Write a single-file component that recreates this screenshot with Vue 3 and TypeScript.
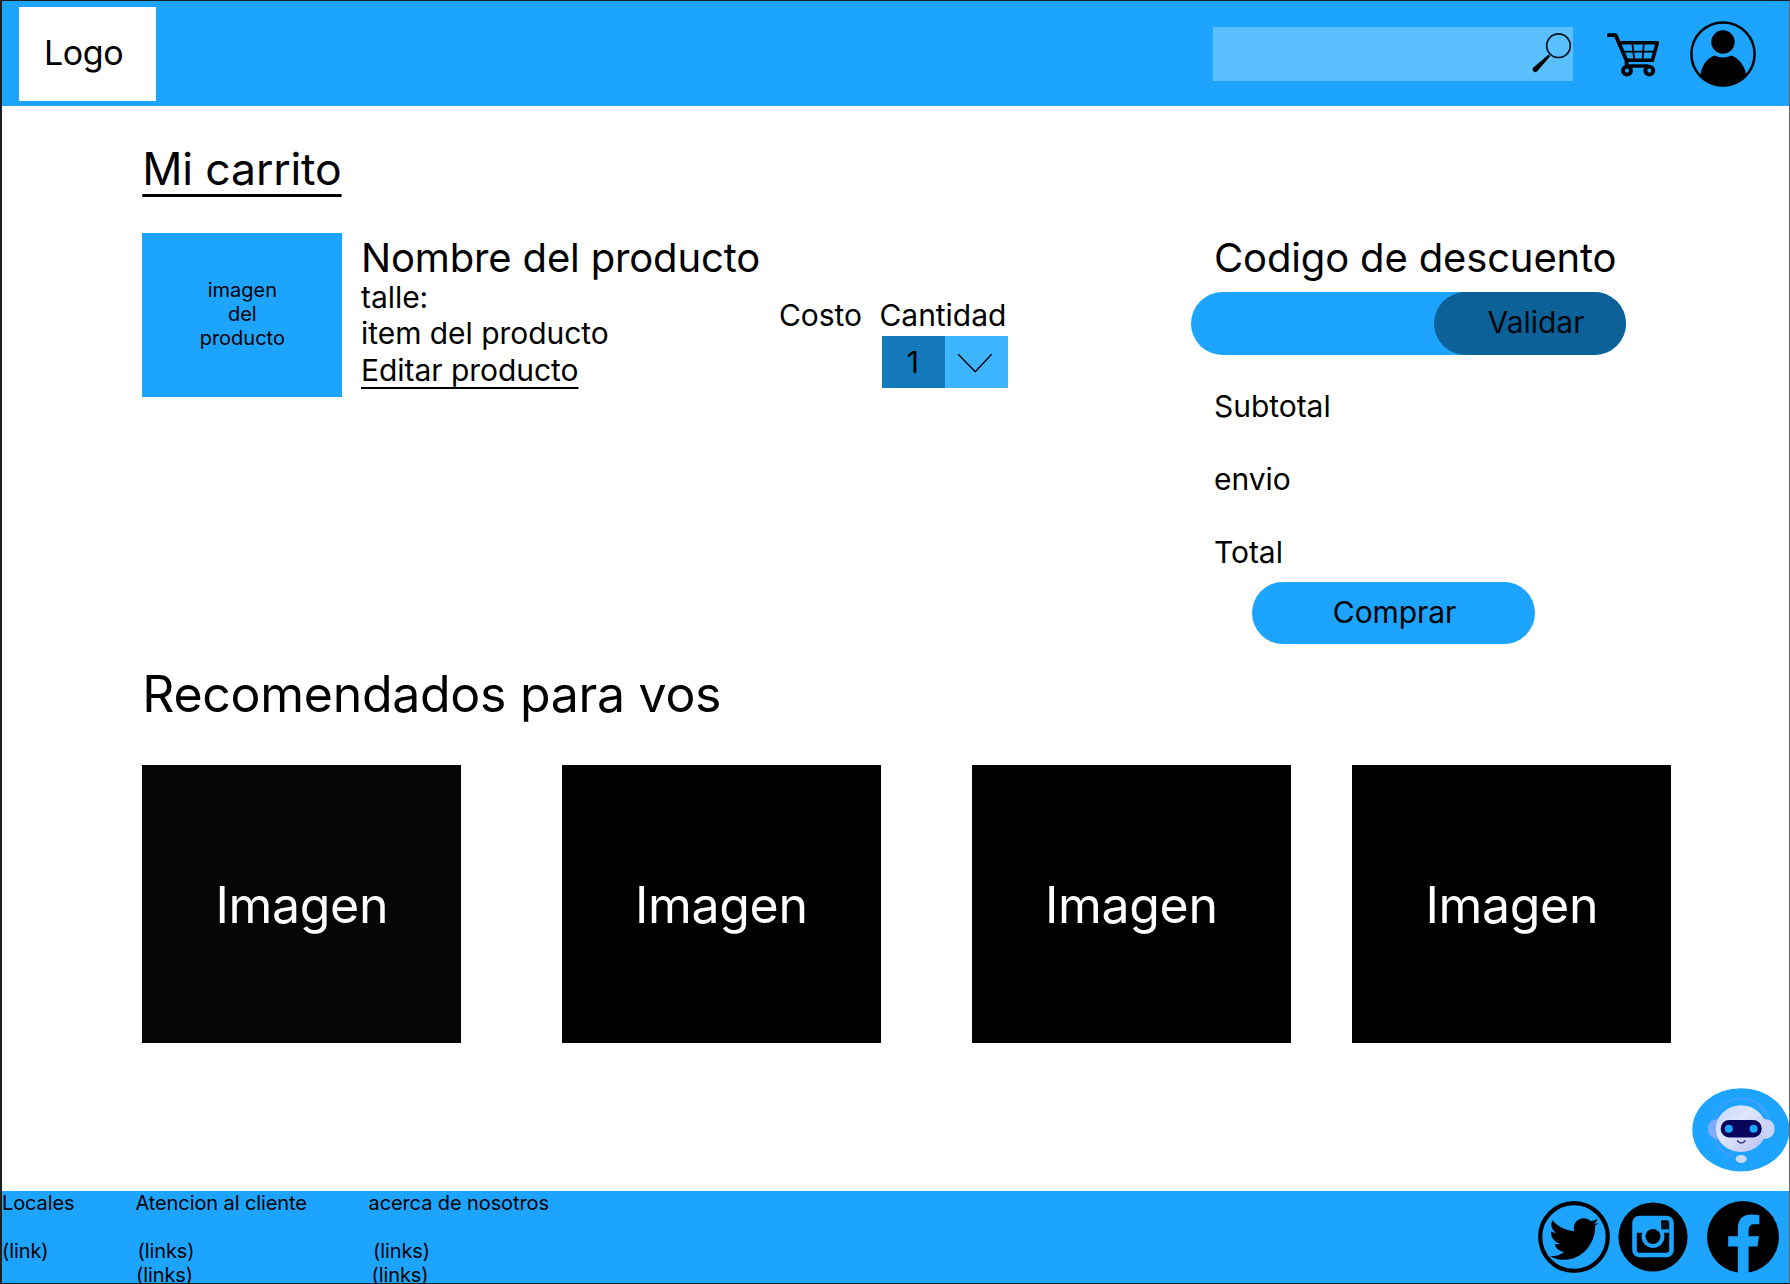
<script setup lang="ts">
interface FooterColumn {
  title: string
  links: string[]
}

const recommended: string[] = ['Imagen', 'Imagen', 'Imagen', 'Imagen']

const summary: string[] = ['Subtotal', 'envio', 'Total']

const footerColumns: FooterColumn[] = [
  { title: 'Locales', links: ['(link)'] },
  { title: 'Atencion al cliente', links: ['(links)', '(links)'] },
  { title: 'acerca de nosotros', links: ['(links)', '(links)'] },
]
</script>

<template>
  <div class="page">
    <header class="header">
      <div class="logo">Logo</div>
      <div class="search">
        <svg class="search-icon" width="42" height="42" viewBox="0 0 42 42">
          <circle cx="28.5" cy="14.7" r="11.8" fill="none" stroke="#06131c" stroke-width="1.7" />
          <path d="M18.6 23.6 L20.2 25.2 L7 40.6 Q4.6 42 3 39.8 Q1.6 37.8 3.4 36.6 Z" fill="#000" />
        </svg>
      </div>
      <svg class="cart" width="54" height="46" viewBox="0 0 54 46">
        <g fill="none" stroke="#000">
          <path d="M1.7 4.2 H8.6 L19.6 29.8 V34" stroke-width="3.8" stroke-linecap="round" stroke-linejoin="round" />
          <path d="M12.5 11.7 H50.3 L45.4 29.2 H20" stroke-width="3.6" stroke-linejoin="round" />
          <path d="M15.5 20.7 H47.5 M25.3 12 L27.2 28 M36.9 12 L35.6 28" stroke-width="1.8" />
          <path d="M20 35 H41.5" stroke-width="3.4" />
          <circle cx="20" cy="39.6" r="4" stroke-width="3.9" />
          <circle cx="42.3" cy="39.6" r="4" stroke-width="3.9" />
        </g>
      </svg>
      <svg class="user" width="68" height="68" viewBox="0 0 68 68">
        <circle cx="34" cy="34" r="31.6" fill="none" stroke="#000" stroke-width="2.5" />
        <circle cx="34" cy="22" r="11.7" />
        <path d="M11.5 56 C12 47 17 39 25.5 35.6 Q34 39.6 42.5 35.6 C51 39 56 47 57.3 55 Q48 66.5 34 66.5 Q20 66.5 11.5 56 Z" />
      </svg>
    </header>

    <main class="main">
      <h1 class="title">Mi carrito</h1>

      <section class="cart-row">
        <div class="product-image">imagen<br />del<br />producto</div>
        <div class="product-info">
          <h2 class="heading">Nombre del producto</h2>
          <div class="text">talle:</div>
          <div class="text">item del producto</div>
          <div class="text edit">Editar producto</div>
        </div>
        <div class="text cost">Costo</div>
        <div class="quantity">
          <div class="text">Cantidad</div>
          <div class="stepper">
            <div class="amount">1</div>
            <div class="toggle">
              <svg width="36" height="22" viewBox="0 0 36 22">
                <path d="M1.2 1.2 L18.3 18.8 L34.6 1.2" fill="none" stroke="#000" stroke-width="1.4" />
              </svg>
            </div>
          </div>
        </div>
        <aside class="checkout">
          <h2 class="heading code-title">Codigo de descuento</h2>
          <div class="code">
            <button class="validate">Validar</button>
          </div>
          <div class="summary">
            <div v-for="line in summary" :key="line" class="text">{{ line }}</div>
          </div>
          <button class="buy">Comprar</button>
        </aside>
      </section>

      <h2 class="recommended-title">Recomendados para vos</h2>
      <section class="cards">
        <div v-for="(label, i) in recommended" :key="i" class="card">{{ label }}</div>
      </section>
    </main>

    <svg class="bot" width="98" height="84" viewBox="0 0 98 84">
      <defs>
        <linearGradient id="botFace" x1="0" y1="0" x2="1" y2="1">
          <stop offset="0" stop-color="#c3d4ff" />
          <stop offset="0.4" stop-color="#dfe6fb" />
          <stop offset="1" stop-color="#b9bff2" />
        </linearGradient>
        <linearGradient id="botBand" x1="0" y1="0" x2="1" y2="0">
          <stop offset="0" stop-color="#5e92ff" />
          <stop offset="1" stop-color="#6e9cff" />
        </linearGradient>
      </defs>
      <ellipse cx="48.9" cy="41.8" rx="48.6" ry="41.6" fill="#1ca4ff" />
      <path d="M43 69 C30 66 21 56 22 38 C23 21 34 10.5 49 10.5 C64 10.5 73 20 76.5 32" fill="none" stroke="url(#botBand)" stroke-width="1.7" opacity="0.65" />
      <path d="M26 31 Q16 31 16 41 Q16 51 28 51 Z" fill="#80aaff" />
      <path d="M72 31 Q82.5 31 82.5 41 Q82.5 51 70 51 Z" fill="#c9d4fc" />
      <ellipse cx="49" cy="40.7" rx="25.2" ry="23.4" fill="url(#botFace)" />
      <rect x="28.7" y="32" width="41" height="17.5" rx="8.5" fill="#09055c" />
      <circle cx="36.8" cy="40.7" r="4" fill="#1ca4ff" />
      <circle cx="61.6" cy="40.7" r="4" fill="#1ca4ff" />
      <path d="M45.2 52.5 Q49.3 57.5 53.4 52.5" fill="none" stroke="#332e80" stroke-width="1.4" />
      <ellipse cx="49.2" cy="71" rx="5.6" ry="4" fill="#c9d9fb" />
    </svg>

    <footer class="footer">
      <div v-for="column in footerColumns" :key="column.title" class="footer-column">
        <div>{{ column.title }}</div>
        <div class="footer-links">
          <div v-for="(link, i) in column.links" :key="i" class="footer-link">{{ link }}</div>
        </div>
      </div>
      <div class="social">
        <svg class="twitter" width="74" height="74" viewBox="0 0 74 74">
          <circle cx="37" cy="37" r="33.8" fill="none" stroke="#000" stroke-width="4.2" />
          <path d="M61.7 23 Q59.5 24.7 58.2 25.5 C58.6 45 44 59.6 28 59.8 Q20 60 12.8 56.2 Q22 56.4 27 52 Q19 50.5 17.8 44.2 Q20.5 44.6 22.6 43.8 Q14 41 14 31.6 Q16.4 33 19 33.2 Q12 27 15.4 20.2 C21 26.6 28 30.4 37.2 31 C35.6 23 40.5 18.2 46.8 18.2 Q51 18.2 54.2 21.2 Q57.8 20.4 60.8 18.8 Q60 21.8 57.2 23.7 Q59.5 23.7 61.7 23 Z" />
        </svg>
        <svg class="instagram" width="70" height="70" viewBox="0 0 70 70">
          <circle cx="35" cy="35" r="34.6" />
          <rect x="16.5" y="16" width="37" height="37" rx="5" fill="none" stroke="#1ca4ff" stroke-width="4.6" />
          <path d="M17 16 H43.2 V27.2 H51 V30.8 H17 Z" fill="#1ca4ff" />
          <circle cx="35" cy="34.5" r="11.4" fill="#1ca4ff" />
          <circle cx="35" cy="34.5" r="7.5" fill="#000" />
          <path d="M43.5 20.2 H50.5 V27.2 H43.5 Z" fill="#08131b" />
        </svg>
        <svg class="facebook" width="74" height="74" viewBox="0 0 74 74">
          <circle cx="37" cy="37" r="36" />
          <path d="M31.8 73 V46.6 H22.2 V36.2 H31.8 V29 C31.8 19 37 14.6 45.5 14.6 Q50 14.6 53.4 15.2 V24.2 H48.5 Q42.6 24.2 42.6 29.8 V36.2 H53 L51.4 46.6 H42.6 V73 Z" fill="#1ca4ff" />
        </svg>
      </div>
    </footer>
  </div>
</template>

<style>
body {
  margin: 0;
  background: #fff;
}
</style>

<style scoped>
.page {
  position: relative;
  box-sizing: border-box;
  width: 1790px;
  height: 1284px;
  display: flex;
  flex-direction: column;
  overflow: hidden;
  border: 1px solid #1e1e1e;
  border-left-width: 2px;
  border-right-color: #666;
  background: #fff;
  color: #000;
  font-family: Inter, 'Liberation Sans', sans-serif;
  font-weight: 400;
  font-optical-sizing: none;
}

h1,
h2 {
  margin: 0;
  font-weight: 400;
  white-space: nowrap;
}

button {
  border: 0;
  padding: 0;
  color: #000;
  font: inherit;
  font-optical-sizing: none;
}

svg {
  display: block;
  flex: none;
}

/* Header */
.header {
  flex: none;
  display: flex;
  align-items: flex-start;
  height: 105.3px;
  background: #1ca4ff;
}

.logo {
  box-sizing: border-box;
  width: 136.5px;
  height: 94px;
  margin: 6.3px 0 0 17.3px;
  padding: 25px 8px 0 0;
  background: #fff;
  font-size: 34px;
  line-height: 42px;
  letter-spacing: -0.4px;
  text-align: center;
}

.search {
  display: flex;
  justify-content: flex-end;
  width: 360.5px;
  height: 54px;
  margin: 26px 0 0 1057.2px;
  background: #5ac0ff;
}

.search-icon {
  margin: 4px 1px 0 0;
}

.cart {
  margin: 30px 0 0 34px;
}

.user {
  margin: 18.5px 0 0 27.5px;
}

/* Main */
.main {
  flex: none;
  height: 1085px;
  padding-left: 140.3px;
}

.title {
  padding-top: 36px;
  font-size: 44.5px;
  line-height: 54px;
  letter-spacing: -0.15px;
  text-decoration: underline;
  text-decoration-thickness: 3px;
  text-underline-offset: 9px;
}

.cart-row {
  display: flex;
  align-items: flex-start;
  height: 430px;
  margin-top: 36.7px;
}

.product-image {
  box-sizing: border-box;
  width: 200px;
  height: 164px;
  padding-top: 45px;
  background: #1ca4ff;
  font-size: 20px;
  line-height: 24px;
  text-align: center;
}

.product-info {
  width: 418px;
  margin-left: 18.7px;
}

.heading {
  padding-top: 1px;
  font-size: 40px;
  line-height: 48px;
  letter-spacing: -0.15px;
}

.product-info .heading {
  height: 45px;
}

.text {
  font-size: 30px;
  line-height: 36.3px;
  letter-spacing: -0.04px;
  white-space: nowrap;
}

.edit {
  text-decoration: underline;
  text-decoration-thickness: 2px;
  text-underline-offset: 6px;
  text-decoration-skip-ink: none;
}

.cost {
  width: 100.5px;
  margin-top: 64px;
}

.quantity {
  width: 130px;
  margin-top: 64px;
}

.stepper {
  display: flex;
  width: 126px;
  height: 52px;
  margin: 2.9px 0 0 2.5px;
  background: #3eb5ff;
}

.amount {
  box-sizing: border-box;
  width: 63.5px;
  padding-right: 2px;
  background: #147abb;
  font-size: 30px;
  line-height: 52px;
  text-align: center;
}

.toggle {
  padding: 17px 0 0 12px;
}

.checkout {
  width: 436px;
  margin-left: 181.5px;
}

.code-title {
  margin-left: 23px;
}

.code {
  display: flex;
  justify-content: flex-end;
  width: 435px;
  height: 63px;
  margin-top: 10.5px;
  border-radius: 32px;
  background: #1ca4ff;
}

.validate {
  width: 192px;
  padding-left: 12px;
  padding-bottom: 3px;
  border-radius: 32px;
  background: #0c6198;
  color: #02080d;
  font-size: 30px;
}

.summary {
  display: flex;
  flex-direction: column;
  gap: 36.3px;
  margin: 33px 0 0 23px;
}

.buy {
  display: block;
  width: 283px;
  height: 62px;
  margin: 12.5px 0 0 61px;
  padding: 0 0 2px 2px;
  border-radius: 31px;
  background: #1ca4ff;
  font-size: 30px;
  letter-spacing: -0.1px;
}

.recommended-title {
  padding-top: 1px;
  font-size: 50px;
  line-height: 60px;
  letter-spacing: -0.29px;
}

.cards {
  display: flex;
  margin-top: 41px;
}

.card {
  flex: none;
  width: 319px;
  height: 277.7px;
  margin-right: 91px;
  background: #000;
  color: #fff;
  font-size: 50px;
  line-height: 281px;
  letter-spacing: -0.35px;
  text-align: center;
}

.card:first-child {
  margin-right: 100.5px;
  background: #060606;
}

.card:nth-child(3) {
  margin-right: 61.5px;
}

.card:last-child {
  margin-right: 0;
}

/* Assistant bubble floating over the page corner */
.bot {
  position: absolute;
  right: -1px;
  bottom: 111px;
}

/* Footer */
.footer {
  flex: 1;
  display: flex;
  min-height: 0;
  background: #1ca4ff;
  font-size: 20px;
  line-height: 23.8px;
  letter-spacing: -0.1px;
  white-space: nowrap;
}

.footer-column {
  padding-top: 1px;
}

.footer-column:nth-child(1) {
  width: 133.5px;
}

.footer-column:nth-child(2) {
  width: 233px;
}

.footer-column:nth-child(3) {
  width: 240px;
}

.footer-links {
  margin-top: 23.8px;
}

.footer-column:nth-child(2) .footer-link {
  padding-left: 2px;
}

.footer-column:nth-child(3) .footer-link {
  padding-left: 4.5px;
}

.footer-column .footer-link + .footer-link {
  margin-left: -1.5px;
}

.social {
  display: flex;
  align-items: flex-start;
  margin-left: auto;
  margin-right: 9px;
}

.twitter {
  margin-top: 9px;
}

.instagram {
  margin: 10.5px 0 0 7.5px;
}

.facebook {
  margin: 9px 0 0 18px;
}
</style>
